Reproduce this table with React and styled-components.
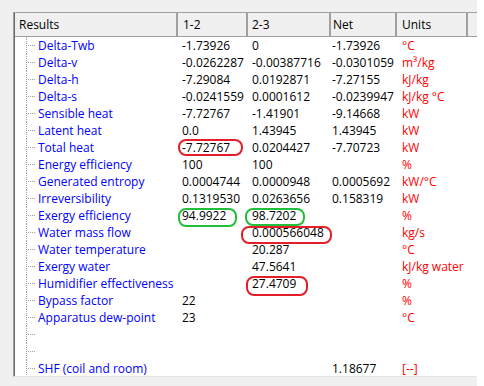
import React from "react";
import styled, { createGlobalStyle } from "styled-components";

const columns = [
  { key: "label", head: "Results", hpad: 4, pad: 23, width: 163 },
  { key: "a", head: "1-2", hpad: 5, pad: 4, width: 70 },
  { key: "b", head: "2-3", hpad: 4, pad: 4, width: 83 },
  { key: "net", head: "Net", hpad: 2, pad: 1, width: 66 },
  { key: "unit", head: "Units", hpad: 5, pad: 5, width: 71 },
];

const RED = "#e3202a";
const GREEN = "#22c03a";

const rows = [
  { label: "Delta-Twb", a: "-1.73926", b: "0", net: "-1.73926", unit: "°C" },
  { label: "Delta-v", a: "-0.0262287", b: "-0.00387716", net: "-0.0301059", unit: "m³/kg" },
  { label: "Delta-h", a: "-7.29084", b: "0.0192871", net: "-7.27155", unit: "kJ/kg" },
  { label: "Delta-s", a: "-0.0241559", b: "0.0001612", net: "-0.0239947", unit: "kJ/kg °C" },
  { label: "Sensible heat", a: "-7.72767", b: "-1.41901", net: "-9.14668", unit: "kW" },
  { label: "Latent heat", a: "0.0", b: "1.43945", net: "1.43945", unit: "kW" },
  {
    label: "Total heat", a: "-7.72767", b: "0.0204427", net: "-7.70723", unit: "kW",
    marks: { a: { color: RED, x: 0, y: 0, w: 65, h: 17 } },
  },
  { label: "Energy efficiency", a: "100", b: "100", unit: "%" },
  { label: "Generated entropy", a: "0.0004744", b: "0.0000948", net: "0.0005692", unit: "kW/°C" },
  { label: "Irreversibility", a: "0.1319530", b: "0.0263656", net: "0.158319", unit: "kW" },
  {
    label: "Exergy efficiency", a: "94.9922", b: "98.7202", unit: "%",
    marks: {
      a: { color: GREEN, x: 0, y: 1, w: 59, h: 19 },
      b: { color: GREEN, x: -3, y: 1, w: 60, h: 18 },
    },
  },
  {
    label: "Water mass flow", b: "0.000566048", unit: "kg/s",
    marks: { b: { color: RED, x: -7, y: 2, w: 91, h: 18 } },
  },
  { label: "Water temperature", b: "20.287", unit: "°C" },
  { label: "Exergy water", b: "47.5641", unit: "kJ/kg water" },
  {
    label: "Humidifier effectiveness", b: "27.4709", unit: "%",
    marks: { b: { color: RED, x: -2, y: 1, w: 62, h: 20 } },
  },
  { label: "Bypass factor", a: "22", unit: "%" },
  { label: "Apparatus dew-point", a: "23", unit: "°C" },
  {},
  {},
  { label: "SHF (coil and room)", net: "1.18677", unit: "[--]" },
];

const GlobalStyle = createGlobalStyle`
  body {
    margin: 0;
    background: #ffffff;
  }
`;

const Window = styled.div`
  width: 477px;
  height: 386px;
  box-sizing: border-box;
  padding: 12px 0 0 13px;
  background: #f0f0f0;
  font-family: "Open Sans", "Noto Sans", sans-serif;
  font-size: 12px;
`;

const ListView = styled.div`
  height: 365px;
  box-sizing: border-box;
  background: #ffffff;
  border-left: 1px solid #a0a0a0;
  border-top: 1px solid #a0a0a0;
  border-bottom: 1px solid #e3e3e3;
  box-shadow: inset 1px 0 0 #696969;
  padding-left: 1px;
  overflow: hidden;
`;

const gridColumns = columns.map((c) => `${c.width}px`).join(" ") + " 1fr";

const HeaderRow = styled.div`
  display: grid;
  grid-template-columns: ${gridColumns};
  height: 23px;
  background: #f0f0f0;
  border-bottom: 1px solid #a0a0a0;
`;

const HeaderCell = styled.div`
  box-sizing: border-box;
  padding-left: ${(p) => p.$pad}px;
  line-height: 23px;
  color: #000000;
  border-right: 2px solid #a0a0a0;
  white-space: nowrap;
`;

const HeaderFill = styled.div``;

const Row = styled.div`
  display: grid;
  grid-template-columns: ${gridColumns};
  height: 17px;
  line-height: 17px;
`;

const dots = "repeating-linear-gradient(to bottom, #a0a0a0 0 1px, transparent 1px 2px)";

const LabelCell = styled.div`
  position: relative;
  padding-left: ${(p) => p.$pad}px;
  color: #0000ff;
  white-space: nowrap;

  &::before {
    content: "";
    position: absolute;
    left: 11px;
    top: 0;
    width: 1px;
    height: 100%;
    background: ${dots};
  }

  &::after {
    content: "";
    position: absolute;
    left: 13px;
    top: 8px;
    width: 7px;
    height: 1px;
    background: repeating-linear-gradient(to right, #a0a0a0 0 1px, transparent 1px 2px);
  }
`;

const ValueCell = styled.div`
  position: relative;
  padding-left: ${(p) => p.$pad}px;
  color: ${(p) => (p.$unit ? "#ff0000" : "#000000")};
  white-space: nowrap;
  overflow: visible;
`;

const Mark = styled.span`
  position: absolute;
  left: ${(p) => p.$x}px;
  top: ${(p) => p.$y}px;
  width: ${(p) => p.$w}px;
  height: ${(p) => p.$h}px;
  box-sizing: border-box;
  border: 2px solid ${(p) => p.$color};
  border-radius: 8px;
  pointer-events: none;
`;

const ResultRow = ({ row }) => (
  <Row>
    <LabelCell $pad={columns[0].pad}>{row.label}</LabelCell>
    {columns.slice(1).map((c) => {
      const mark = row.marks && row.marks[c.key];
      return (
        <ValueCell key={c.key} $pad={c.pad} $unit={c.key === "unit"}>
          {row[c.key]}
          {mark && (
            <Mark $color={mark.color} $x={mark.x} $y={mark.y} $w={mark.w} $h={mark.h} />
          )}
        </ValueCell>
      );
    })}
    <div />
  </Row>
);

export default function App() {
  return (
    <>
      <GlobalStyle />
      <Window>
        <ListView>
          <HeaderRow>
            {columns.map((c) => (
              <HeaderCell key={c.key} $pad={c.hpad}>
                {c.head}
              </HeaderCell>
            ))}
            <HeaderFill />
          </HeaderRow>
          {rows.map((row, i) => (
            <ResultRow key={i} row={row} />
          ))}
        </ListView>
      </Window>
    </>
  );
}
